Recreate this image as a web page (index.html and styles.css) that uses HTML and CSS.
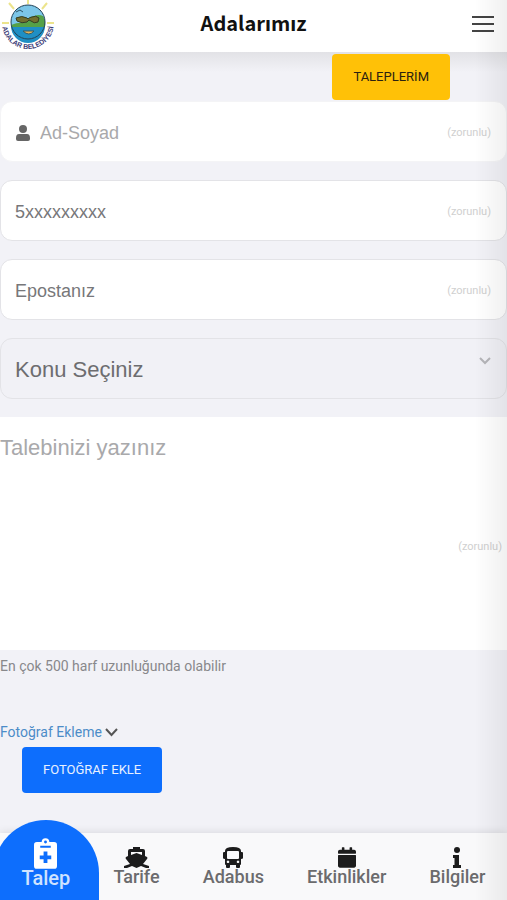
FILE: index.html
```html
<!DOCTYPE html>
<html lang="tr">
<head>
  <meta charset="UTF-8">
  <meta name="viewport" content="width=device-width, initial-scale=1">
  <title>Adalarımız</title>
  <link rel="stylesheet" href="styles.css">
</head>
<body>
  <header class="header">
    <svg class="logo" viewBox="0 0 56 52">
      <g stroke="#ece48c" stroke-width="2">
        <path d="M28 0v4M9 3l5 6M47 3l-5 6M2 23h7M47 23h7"/>
      </g>
      <circle cx="28" cy="22" r="17" fill="#7cc6e8"/>
      <path d="M11 26h34a17 17 0 0 1-34 0z" fill="#1f8fc4"/>
      <path d="M11 25q7-3 14-2 3-6 9-7 5-2 9 0 3 5 2 11H12z" fill="#55a147"/>
      <path d="M16 18q6-3 11 0l1 1q2-2 4-2 4-2 7 1l-1 4q-4 2-7-1l-2-1-2 2q-5 2-10-1z" fill="#73702f" stroke="#333e24"/>
      <path d="M16 12l4-2 3 2" fill="none" stroke="#2c5266"/>
      <path d="M23 31h11q-5 6-11 0z" fill="#e8b45a" stroke="#385c60"/>
      <circle cx="28" cy="22" r="17" fill="none" stroke="#244458"/>
      <path id="logoArc" d="M2 23a26 26 0 0 0 52 0" fill="none"/>
      <text class="logo-text"><textPath href="#logoArc" startOffset="50%">ADALAR BELEDİYESİ</textPath></text>
    </svg>
    <h1>Adalarımız</h1>
    <button class="menu-btn" type="button" aria-label="Menü">
      <svg width="24" height="20" viewBox="0 0 24 20"><path d="M1 3h22M1 10h22M1 17h22"/></svg>
    </button>
  </header>

  <main class="content">
    <div class="top-row">
      <button class="btn btn-yellow" type="button">TALEPLERİM</button>
    </div>

    <form class="form">
      <div class="field name">
        <label for="adSoyad" aria-label="Ad-Soyad">
          <svg width="14" height="16" viewBox="0 0 14 16"><circle cx="7" cy="4" r="4"/><path d="M3 9h8q3 0 3 4v1q0 2-2 2H2q-2 0-2-2v-1q0-4 3-4z"/></svg>
        </label>
        <input type="text" id="adSoyad" placeholder="Ad-Soyad">
        <span class="required">(zorunlu)</span>
      </div>
      <div class="field">
        <input type="tel" id="telefon" aria-label="Telefon" placeholder="5xxxxxxxxx">
        <span class="required">(zorunlu)</span>
      </div>
      <div class="field">
        <input type="email" id="eposta" aria-label="Eposta" placeholder="Epostanız">
        <span class="required">(zorunlu)</span>
      </div>
      <div class="field subject">
        <select id="konu" aria-label="Konu">
          <option>Konu Seçiniz</option>
        </select>
        <svg class="arrow" width="12" height="8" viewBox="0 0 12 8"><path d="M1 1l5 5 5-5"/></svg>
      </div>
      <div class="message">
        <textarea id="talep" aria-label="Talep" maxlength="500" placeholder="Talebinizi yazınız"></textarea>
        <span class="required">(zorunlu)</span>
      </div>
      <p class="hint">En çok 500 harf uzunluğunda olabilir</p>
      <a class="photo-link" href="#">Fotoğraf Ekleme
        <svg width="13" height="9" viewBox="0 0 13 9"><path d="M1 1l5.5 6L12 1"/></svg>
      </a>
      <button class="btn btn-blue" type="button">FOTOĞRAF EKLE</button>
    </form>
  </main>

  <nav class="tabbar">
    <a class="tab active" href="#">
      <svg width="23" height="31" viewBox="0 0 384 512"><path fill-rule="evenodd" d="M336 64h-80a64 64 0 0 0-128 0H48Q0 64 0 112v352q0 48 48 48h288q48 0 48-48V112q0-48-48-48zM192 40a24 24 0 1 1 0 48 24 24 0 0 1 0-48zM104 128h176v32H104zM160 224h64v64h64v64h-64v64h-64v-64H96v-64h64z"/></svg>
      <span>Talep</span>
    </a>
    <a class="tab" href="#">
      <svg width="25" height="21" viewBox="0 0 25 21"><path fill-rule="evenodd" d="M9 0h7v2h3q2 0 2 2v5l2 1q1 1 0 2l-4 5 6 2v2h-3l-5-2-4.500 2L8 19l-5 2H0v-2l6-2-4-5q-1-1 0-2l2-1V4q0-2 2-2h3zM7 5v3l5.500-2L18 8V5z"/></svg>
      <span>Tarife</span>
    </a>
    <a class="tab" href="#">
      <svg width="20" height="21" viewBox="0 0 20 21"><path fill-rule="evenodd" d="M10 0q8 0 8 4v1h1q1 0 1 1v5q0 1-2 1v5q0 1-1 1v2q0 1-1 1h-2q-1 0-1-1v-2H7v2q0 1-1 1H4q-1 0-1-1v-2q-1 0-1-1v-5q-2 0-2-1V6q0-1 1-1h1V4q0-4 8-4zM5 4Q4 4 4 5v6q0 1 1 1h10q1 0 1-1V5q0-1-1-1zM5 13.500a1.300 1.300 0 1 0 .01 0zM15 13.500a1.300 1.300 0 1 0 .01 0z"/></svg>
      <span>Adabus</span>
    </a>
    <a class="tab" href="#">
      <svg width="18" height="21" viewBox="0 0 448 512"><path d="M12 192h424c6.600 0 12 5.400 12 12v260c0 26.500-21.500 48-48 48H48c-26.500 0-48-21.500-48-48V204c0-6.600 5.400-12 12-12zm436-44v-36c0-26.500-21.500-48-48-48h-48V12c0-6.600-5.400-12-12-12h-40c-6.600 0-12 5.400-12 12v52H160V12c0-6.600-5.400-12-12-12h-40c-6.600 0-12 5.400-12 12v52H48C21.500 64 0 85.500 0 112v36c0 6.600 5.400 12 12 12h424c6.600 0 12-5.400 12-12z"/></svg>
      <span>Etkinlikler</span>
    </a>
    <a class="tab" href="#">
      <svg width="8" height="21" viewBox="0 0 8 21"><circle cx="4" cy="3" r="3"/><path d="M0 8h6v10h2v3H0v-3h1.500v-7H0z"/></svg>
      <span>Bilgiler</span>
    </a>
  </nav>
</body>
</html>
```
FILE: styles.css
```css
* {
  box-sizing: border-box;
}
body {
  margin: 0;
  min-height: 100vh;
  display: flex;
  flex-direction: column;
  background: #f2f2f7;
  font-family: Roboto, Arial, sans-serif;
  color: #222;
}
/* shade of the closed side menu */
body::after {
  content: "";
  position: fixed;
  top: 0;
  right: 0;
  bottom: 0;
  width: 32px;
  background: linear-gradient(to right, #0000, #0000000f);
  pointer-events: none;
  z-index: 10;
}
.header {
  height: 52px;
  background: #fff;
  display: grid;
  grid-template-columns: 56px 1fr 56px;
}
.logo {
  display: block;
  width: 56px;
  height: 52px;
}
.logo-text {
  font: bold 7px "Liberation Sans", Arial, sans-serif;
  fill: #3c3c78;
  text-anchor: middle;
}
.header h1 {
  margin: 0;
  text-align: center;
  font: bold 20px/46px "Noto Sans CJK SC", "Noto Sans", sans-serif;
  color: #111;
}
.menu-btn {
  height: 47px;
  justify-self: end;
  margin-right: 12px;
  padding: 0;
  border: none;
  background: none;
  cursor: pointer;
}
.menu-btn svg {
  display: block;
  fill: none;
  stroke: #444;
  stroke-width: 2;
}
.content {
  flex: 1;
  background: linear-gradient(to bottom, #e2e2e6, #f2f2f7 20px);
}
.top-row {
  display: flex;
  justify-content: flex-end;
  padding: 2px 57px 1px 0;
}
.btn {
  height: 46px;
  padding: 0 21px;
  border: none;
  border-radius: 4px;
  font: 13px/20px Roboto, Arial, sans-serif;
  cursor: pointer;
}
.btn-yellow {
  background: #ffc107;
  color: #2b2110;
}
.btn-blue {
  align-self: flex-start;
  margin: 5px 0 24px 22px;
  background: #0d6efd;
  color: #e8f1ff;
}
.form {
  display: flex;
  flex-direction: column;
}
.field {
  height: 61px;
  margin-bottom: 18px;
  padding: 2px 15px 0 14px;
  display: flex;
  align-items: center;
  background: #fff;
  border: 1px solid #e3e3e7;
  border-radius: 12px;
}
.field svg {
  display: block;
  fill: #666;
}
.field input,
.field select {
  flex: 1;
  min-width: 0;
  padding: 0;
  border: none;
  outline: none;
  background: none;
  font: 18px/24px "Liberation Sans", Arial, sans-serif;
  color: #6d6d70;
}
.field input::placeholder {
  color: #77777a;
}
.name {
  border-color: #f4f4f6;
}
.name label {
  margin: 0 10px 0 1px;
}
.name input::placeholder,
.message textarea::placeholder {
  color: #a9a9ab;
}
.required {
  font-size: 11px;
  line-height: 16px;
  color: #d0d0d0;
}
.field.subject {
  background: #f1f1f6;
}
.field select {
  appearance: none;
  font-size: 22px;
  line-height: 30px;
}
.field .arrow {
  align-self: flex-start;
  margin-top: 16px;
  fill: none;
  stroke: #b5b5b9;
  stroke-width: 2;
}
.message {
  height: 233px;
  padding-right: 5px;
  display: flex;
  align-items: center;
  background: #fff;
}
.message textarea {
  flex: 1;
  align-self: stretch;
  padding: 16px 0;
  border: none;
  outline: none;
  resize: none;
  background: none;
  font: 22px/30px "Liberation Sans", Arial, sans-serif;
}
.message .required {
  margin-top: 26px;
}
.hint {
  margin: 6px 0 46px;
  font-size: 14px;
  line-height: 20px;
  color: #88888b;
}
.photo-link {
  align-self: flex-start;
  font-size: 14px;
  line-height: 20px;
  color: #4c8cc8;
  text-decoration: none;
}
.photo-link svg {
  fill: none;
  stroke: #555;
  stroke-width: 2;
}
.tabbar {
  position: relative;
  height: 67px;
  display: flex;
  justify-content: space-around;
  background: #f9f9fa;
  box-shadow: 0 -1px 8px #0000001a;
}
.tab {
  position: relative;
  display: flex;
  flex-direction: column;
  align-items: center;
  justify-content: flex-end;
  padding-bottom: 12px;
  font-size: 18px;
  line-height: 22px;
  font-weight: 500;
  color: #6b6b6d;
  text-decoration: none;
}
.tab svg {
  position: relative;
  display: block;
  margin-bottom: -2px;
  fill: #1c1c1c;
}
.tab span {
  position: relative;
}
.tab.active {
  padding-bottom: 11px;
  font-size: 20px;
  color: #cfe3ff;
}
.tab.active svg {
  fill: #fff;
}
/* blue bubble behind the active tab */
.tab.active::before {
  content: "";
  position: absolute;
  top: -13px;
  bottom: 0;
  left: 50%;
  width: 106px;
  margin-left: -53px;
  background: #0d6efd;
  border-radius: 53px 53px 0 0;
}
```
